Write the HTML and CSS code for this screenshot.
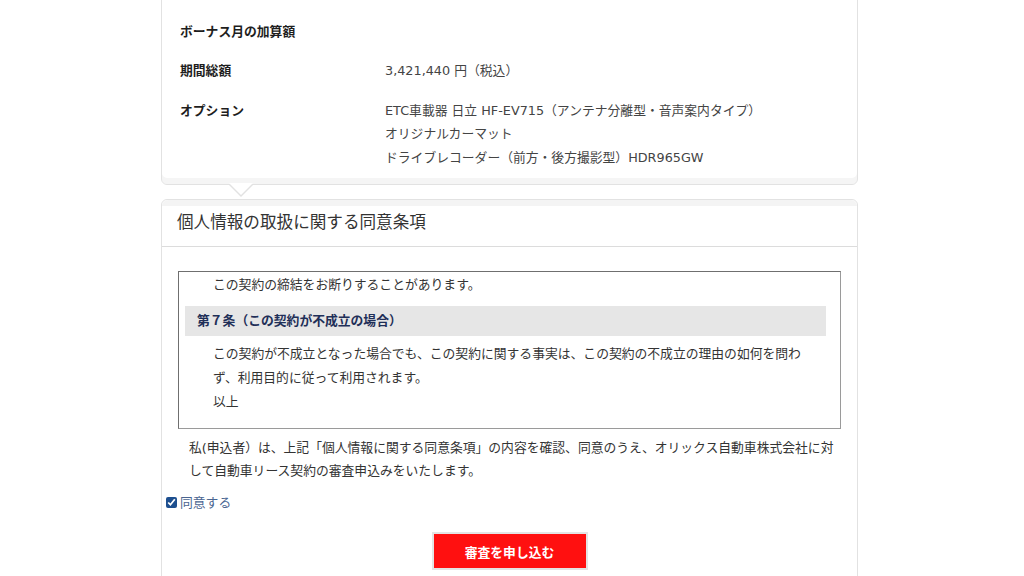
FILE: index.html
```html
<!DOCTYPE html>
<html lang="ja">
<head>
<meta charset="utf-8">
<title>審査申込</title>
<link rel="stylesheet" href="styles.css">
</head>
<body>
<div class="page">
  <section class="card summary">
    <div class="row">
      <div class="label">ボーナス月の加算額</div>
      <div class="value"></div>
    </div>
    <div class="row">
      <div class="label">期間総額</div>
      <div class="value">3,421,440 円（税込）</div>
    </div>
    <div class="row">
      <div class="label">オプション</div>
      <div class="value">
        <div>ETC車載器 日立 HF-EV715（アンテナ分離型・音声案内タイプ）</div>
        <div>オリジナルカーマット</div>
        <div>ドライブレコーダー（前方・後方撮影型）HDR965GW</div>
      </div>
    </div>
    <span class="pointer"></span>
  </section>

  <section class="card consent">
    <h2 class="consent-title">個人情報の取扱に関する同意条項</h2>
    <div class="consent-body">
      <div class="terms">
        <p class="terms-text">この契約の締結をお断りすることがあります。</p>
        <h3 class="terms-head">第７条（この契約が不成立の場合）</h3>
        <p class="terms-text">この契約が不成立となった場合でも、この契約に関する事実は、この契約の不成立の理由の如何を問わず、利用目的に従って利用されます。</p>
        <p class="terms-text">以上</p>
      </div>
      <p class="statement">私(申込者）は、上記「個人情報に関する同意条項」の内容を確認、同意のうえ、オリックス自動車株式会社に対して自動車リース契約の審査申込みをいたします。</p>
      <label class="agree"><input type="checkbox" checked><span>同意する</span></label>
      <div class="actions">
        <button class="submit" type="button">審査を申し込む</button>
      </div>
    </div>
  </section>
</div>
</body>
</html>
```

FILE: styles.css
```css
html, body {
  margin: 0;
  padding: 0;
  background: #ffffff;
}

body {
  font-family: "DejaVu Sans", "Noto Sans CJK JP", sans-serif;
  font-size: 12.8px;
  color: #333333;
  overflow: hidden;
}

.page {
  width: 697px;
  margin-left: 161px;
}

.card {
  position: relative;
  background: #ffffff;
  border: 1px solid #e2e2e2;
  border-radius: 6px;
}

.summary {
  margin-top: -12px;
  padding: 23px 18px 7px 18px;
  box-shadow: inset 0 -6px 0 #f5f5f5;
}

.row {
  display: grid;
  grid-template-columns: 205px 1fr;
  padding: 8px 0;
  line-height: 23.4px;
}

.label {
  font-weight: bold;
  color: #1e1e1e;
}

.value {
  color: #444444;
}

.pointer {
  position: absolute;
  left: 66px;
  bottom: -13px;
  width: 0;
  height: 0;
  border-left: 13px solid transparent;
  border-right: 13px solid transparent;
  border-top: 13px solid #e2e2e2;
}

.pointer::after {
  content: "";
  position: absolute;
  left: -12px;
  top: -14px;
  width: 0;
  height: 0;
  border-left: 12px solid transparent;
  border-right: 12px solid transparent;
  border-top: 12px solid #ffffff;
}

.consent {
  margin-top: 14px;
  height: 420px;
}

.consent-title {
  margin: 0;
  padding: 10px 16px 11px 15px;
  font-size: 16.6px;
  font-weight: normal;
  line-height: 25px;
  color: #333333;
  border-bottom: 1px solid #dcdcdc;
  background: linear-gradient(#f4f4f4, #f4f4f4) no-repeat top / 100% 6px;
  border-radius: 6px 6px 0 0;
}

.consent-body {
  padding: 24px 16px 0 16px;
}

.terms {
  border: 1px solid #6f6f6f;
  border-right-color: #9a9a9a;
  border-bottom-color: #9a9a9a;
  padding: 1px 14px 14px 6px;
  color: #333333;
}

.terms-text {
  margin: 0 20px 0 28px;
  line-height: 24px;
}

.terms-head {
  margin: 9px 0 6px 0;
  height: 30px;
  line-height: 30px;
  padding-left: 12px;
  background: #e6e6e6;
  font-size: 12.8px;
  font-weight: bold;
  color: #1f2f58;
}

.statement {
  margin: 7px 5px 0 11px;
  line-height: 23.4px;
  color: #333333;
}

.agree {
  display: flex;
  align-items: center;
  gap: 3px;
  margin: 8px 0 0 -12px;
  line-height: 23.4px;
  color: #4a6591;
}

.agree input {
  margin: 0;
  width: 11px;
  height: 11px;
  accent-color: #1d4f8f;
}

.actions {
  display: flex;
  justify-content: center;
  margin-top: 18px;
}

.submit {
  width: 156px;
  height: 38px;
  border: 2px solid #e4e4e4;
  background: #ff1010;
  color: #ffffff;
  font-family: "DejaVu Sans", "Noto Sans CJK JP", sans-serif;
  font-size: 12.8px;
  font-weight: bold;
  padding: 0;
}
```
